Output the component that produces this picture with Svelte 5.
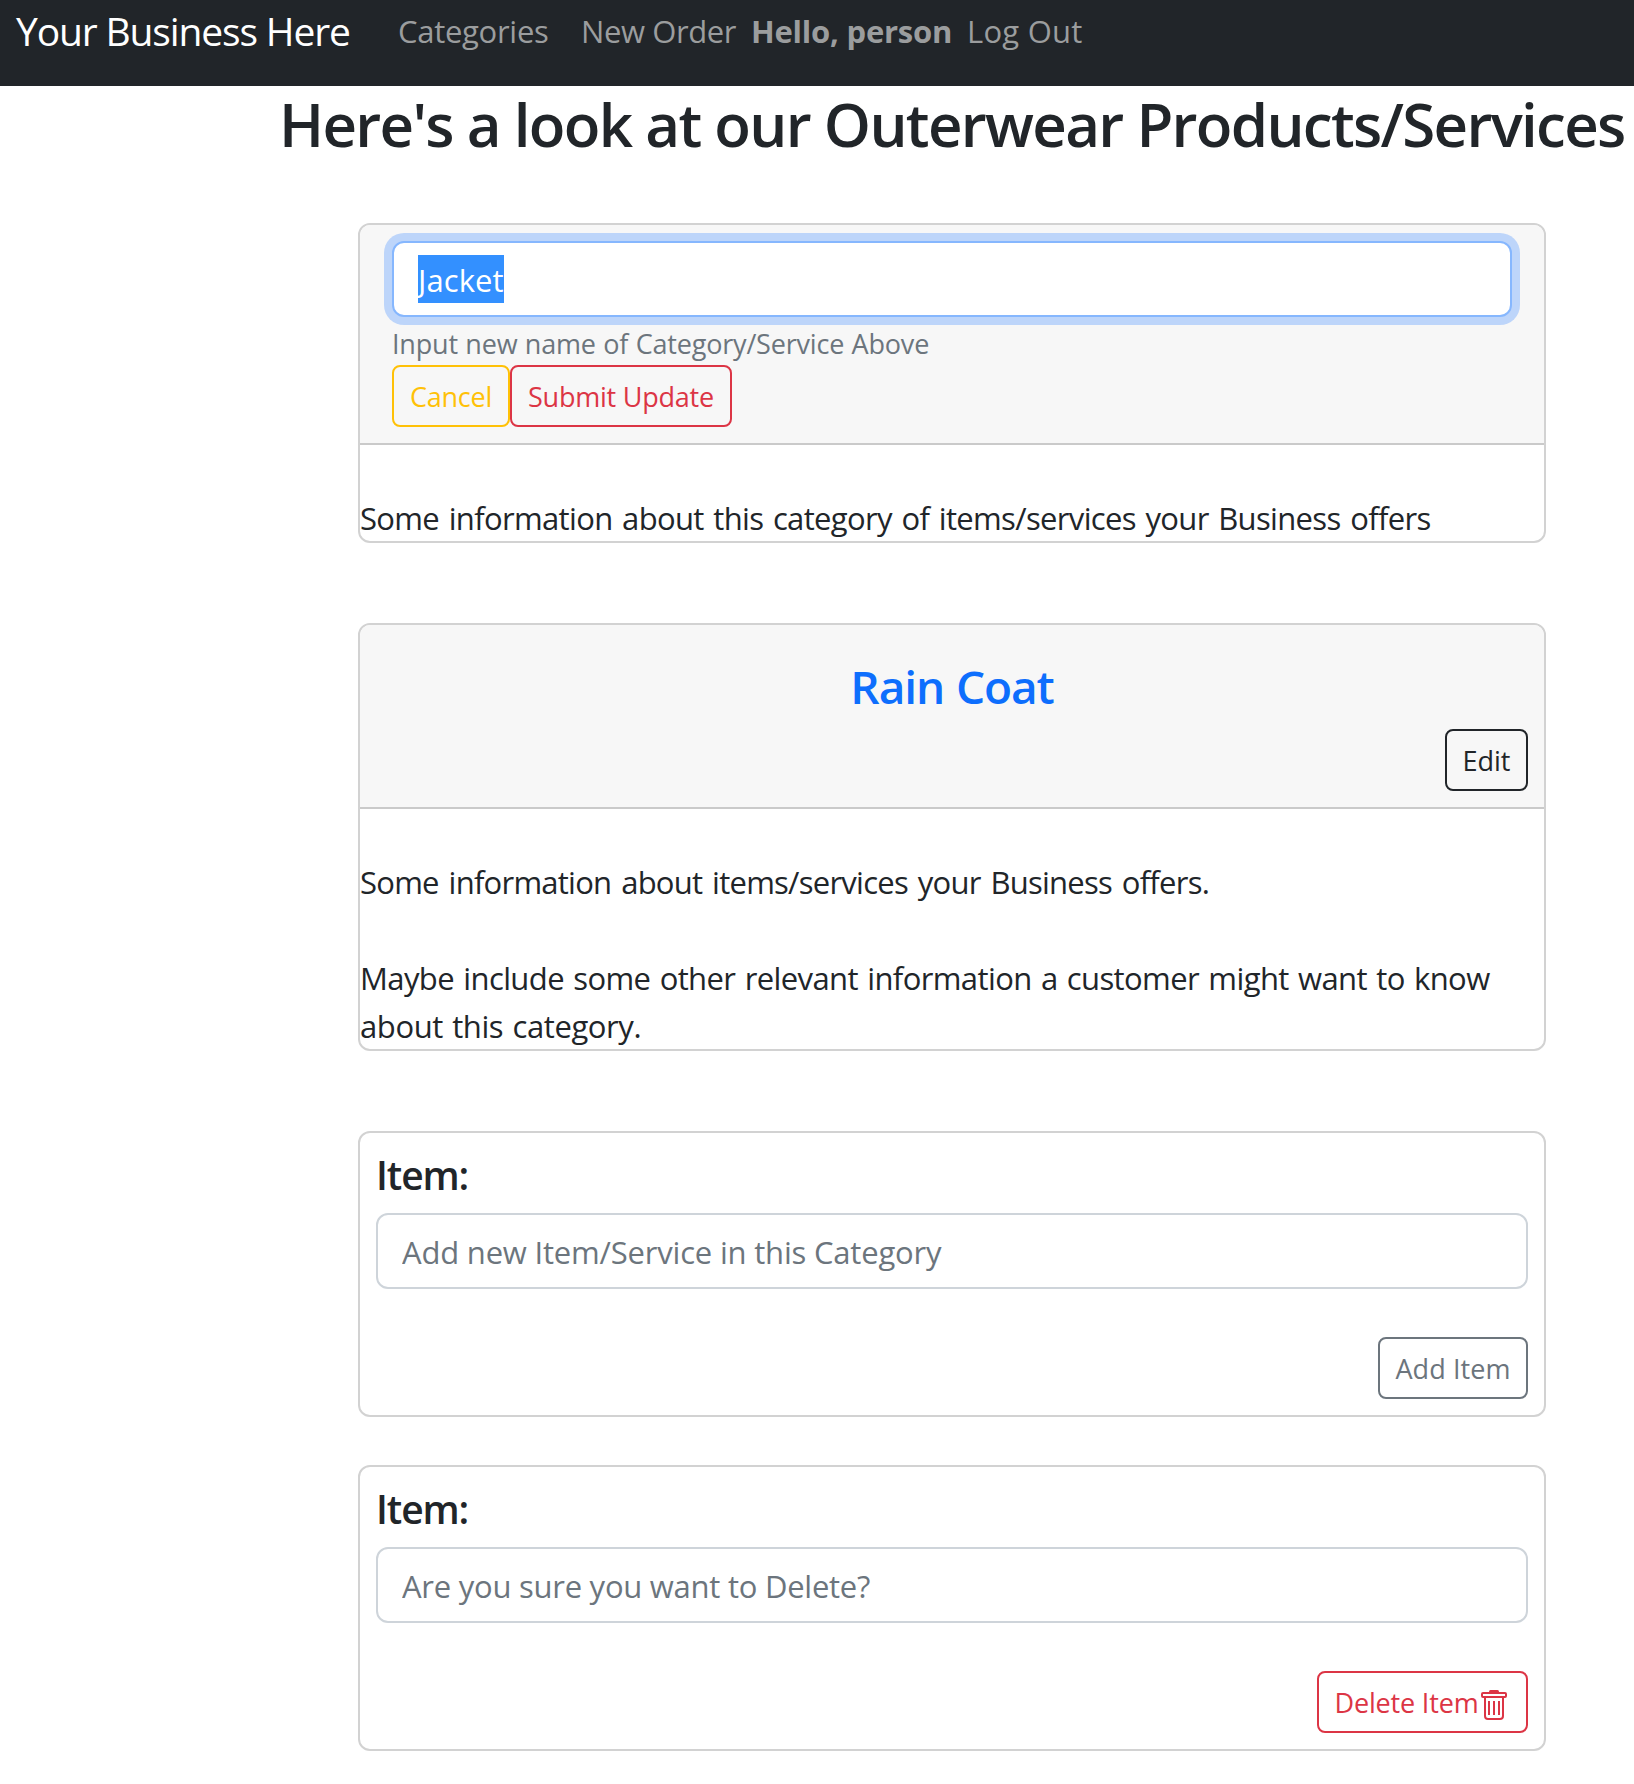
<script>
  const addCategory = { label: 'Item:', placeholder: 'Add new Item/Service in this Category' };
  const deleteCategory = { label: 'Item:', placeholder: 'Are you sure you want to Delete?' };
</script>

<nav class="navbar">
  <a class="brand" href="#home">Your Business Here</a>
  <a class="link categories" href="#categories">Categories</a>
  <a class="link order" href="#order">New Order</a>
  <strong class="link hello">Hello, person</strong>
  <a class="link logout" href="#logout">Log Out</a>
</nav>

<main>
  <h1>Here's a look at our Outerwear Products/Services</h1>

  <div class="cards">
    <section class="card">
      <div class="card-header editing">
        <div class="control focused"><span class="selected">Jacket</span></div>
        <div class="help">Input new name of Category/Service Above</div>
        <div class="buttons">
          <button class="btn warning cancel">Cancel</button>
          <button class="btn danger submit">Submit Update</button>
        </div>
      </div>
      <div class="body">
        <p class="about-category">Some information about this category of items/services your Business offers</p>
      </div>
    </section>

    <section class="card">
      <div class="card-header">
        <h3>Rain Coat</h3>
        <div class="buttons end"><button class="btn dark edit">Edit</button></div>
      </div>
      <div class="body">
        <p class="about-items">Some information about items/services your Business offers.</p>
        <p class="more">Maybe include some other relevant information a customer might want to know <span class="tail">about this category.</span></p>
      </div>
    </section>

    <section class="card form">
      <h5>{addCategory.label}</h5>
      <input class="control add" placeholder={addCategory.placeholder} />
      <div class="buttons end"><button class="btn secondary add-item">Add Item</button></div>
    </section>

    <section class="card form last">
      <h5>{deleteCategory.label}</h5>
      <input class="control delete" placeholder={deleteCategory.placeholder} />
      <div class="buttons end">
        <button class="btn danger delete-item">
          <span>Delete Item</span>
          <svg viewBox="0 0 26 30" width="26" height="30" fill="none" stroke="currentColor">
            <path d="M9.5 1.5h7" stroke-width="3" stroke-linecap="round" />
            <rect x="1" y="3" width="24" height="4" rx="1" stroke-width="2" />
            <path d="M4 7.5v18.5a3 3 0 0 0 3 3h12a3 3 0 0 0 3-3v-18.5" stroke-width="2" />
            <path d="M8 11v14M13 11v14M18 11v14" stroke-width="2" />
          </svg>
        </button>
      </div>
    </section>
  </div>
</main>

<style>
  :global(body) {
    margin: 0;
    background: #fff;
    color: #212529;
    font: 400 31px/48px "Segoe UI", "Open Sans", "Noto Sans", sans-serif;
  }

  .navbar,
  main,
  main * {
    box-sizing: border-box;
  }

  .navbar {
    display: grid;
    grid-template-columns: 382px 183px 170px 216px auto;
    height: 86px;
    padding: 0 0 24px 16px;
    align-items: center;
    background: #212529;
    white-space: nowrap;
  }
  .brand {
    color: #fff;
    font-size: 39px;
    letter-spacing: -1.15px;
    text-decoration: none;
  }
  .link {
    color: #9b9d9e;
    text-decoration: none;
  }
  .categories { letter-spacing: -0.288px; }
  .order { letter-spacing: -0.4px; }
  .hello { letter-spacing: -0.221px; }
  .logout { letter-spacing: 0.25px; }

  h1,
  h3,
  h5,
  p {
    margin: 0;
    font-weight: 600;
  }
  h1 {
    padding-left: 279px;
    font-size: 60px;
    line-height: 76px;
    letter-spacing: -1.68px;
    white-space: nowrap;
  }

  .cards {
    display: flex;
    flex-direction: column;
    width: 1188px;
    margin: 61px 0 0 358px;
    gap: 80px;
  }
  .card {
    border: 2px solid #d2d2d2;
    border-radius: 12px;
    background: #fff;
  }
  .card-header {
    padding: 16px;
    border-bottom: 2px solid #cacaca;
    border-radius: 10px 10px 0 0;
    background: #f7f7f7;
  }
  .card-header.editing {
    padding: 16px 32px;
  }

  .control {
    display: block;
    width: 100%;
    height: 76px;
    padding: 14px 24px 12px;
    border: 2px solid #ced4da;
    border-radius: 12px;
    background: #fff;
    color: #212529;
    font: inherit;
    outline: none;
  }
  .control::placeholder {
    color: #6c757d;
    opacity: 1;
  }
  .control.add { letter-spacing: -0.192px; }
  .control.delete { letter-spacing: -0.253px; }
  .control.focused {
    padding: 12px 24px;
    border-color: #86b7fe;
    box-shadow: 0 0 0 8px #bdd5fa;
  }
  .selected {
    display: block;
    width: 86px;
    height: 48px;
    padding-top: 1px;
    background: #3390ff;
    color: #fff;
    letter-spacing: 0.1px;
  }

  .help {
    height: 48px;
    padding-top: 5px;
    color: #6c757d;
    font-size: 27px;
    line-height: 43px;
    letter-spacing: -0.2px;
    word-spacing: 0.7px;
  }

  .buttons {
    display: flex;
  }
  .buttons.end {
    justify-content: flex-end;
  }
  .btn {
    display: flex;
    height: 62px;
    padding: 2px 0 0;
    align-items: center;
    justify-content: center;
    border: 2px solid currentColor;
    border-radius: 8px;
    background: transparent;
    font: inherit;
    font-size: 27px;
    line-height: 42px;
    white-space: nowrap;
  }
  .warning { color: #ffc107; }
  .danger { color: #dc3545; }
  .dark { color: #212529; }
  .secondary { color: #6c757d; }
  .cancel { width: 118px; letter-spacing: -0.25px; }
  .submit { width: 222px; letter-spacing: -0.223px; }
  .edit { width: 83px; letter-spacing: 0; }
  .add-item { width: 150px; letter-spacing: 0.078px; }
  .delete-item {
    width: 211px;
    padding-right: 4px;
    gap: 2px;
    letter-spacing: -0.16px;
  }
  .delete-item svg {
    flex: none;
    margin-top: 4px;
  }

  .body {
    padding-top: 49px;
    margin-bottom: -1px;
  }
  .body p {
    font-weight: 400;
  }
  .about-category {
    letter-spacing: -0.66px;
    word-spacing: 2.2px;
  }
  .about-items {
    letter-spacing: -0.75px;
    word-spacing: 2.5px;
  }
  .more {
    padding-top: 48px;
    letter-spacing: -0.606px;
    word-spacing: 1.85px;
  }
  .tail {
    letter-spacing: -0.4px;
    word-spacing: 1.6px;
  }

  h3 {
    margin: 16px 0 14px;
    color: #0d6efd;
    font-size: 46px;
    line-height: 58px;
    letter-spacing: -1.1px;
    word-spacing: 1px;
    text-align: center;
  }

  .form {
    padding: 18px 16px 16px;
  }
  .form.last {
    margin-top: -32px;
  }
  h5 {
    margin-bottom: 14px;
    font-size: 39px;
    line-height: 48px;
    letter-spacing: -1.1px;
  }
  .form .buttons {
    margin-top: 48px;
  }
</style>
